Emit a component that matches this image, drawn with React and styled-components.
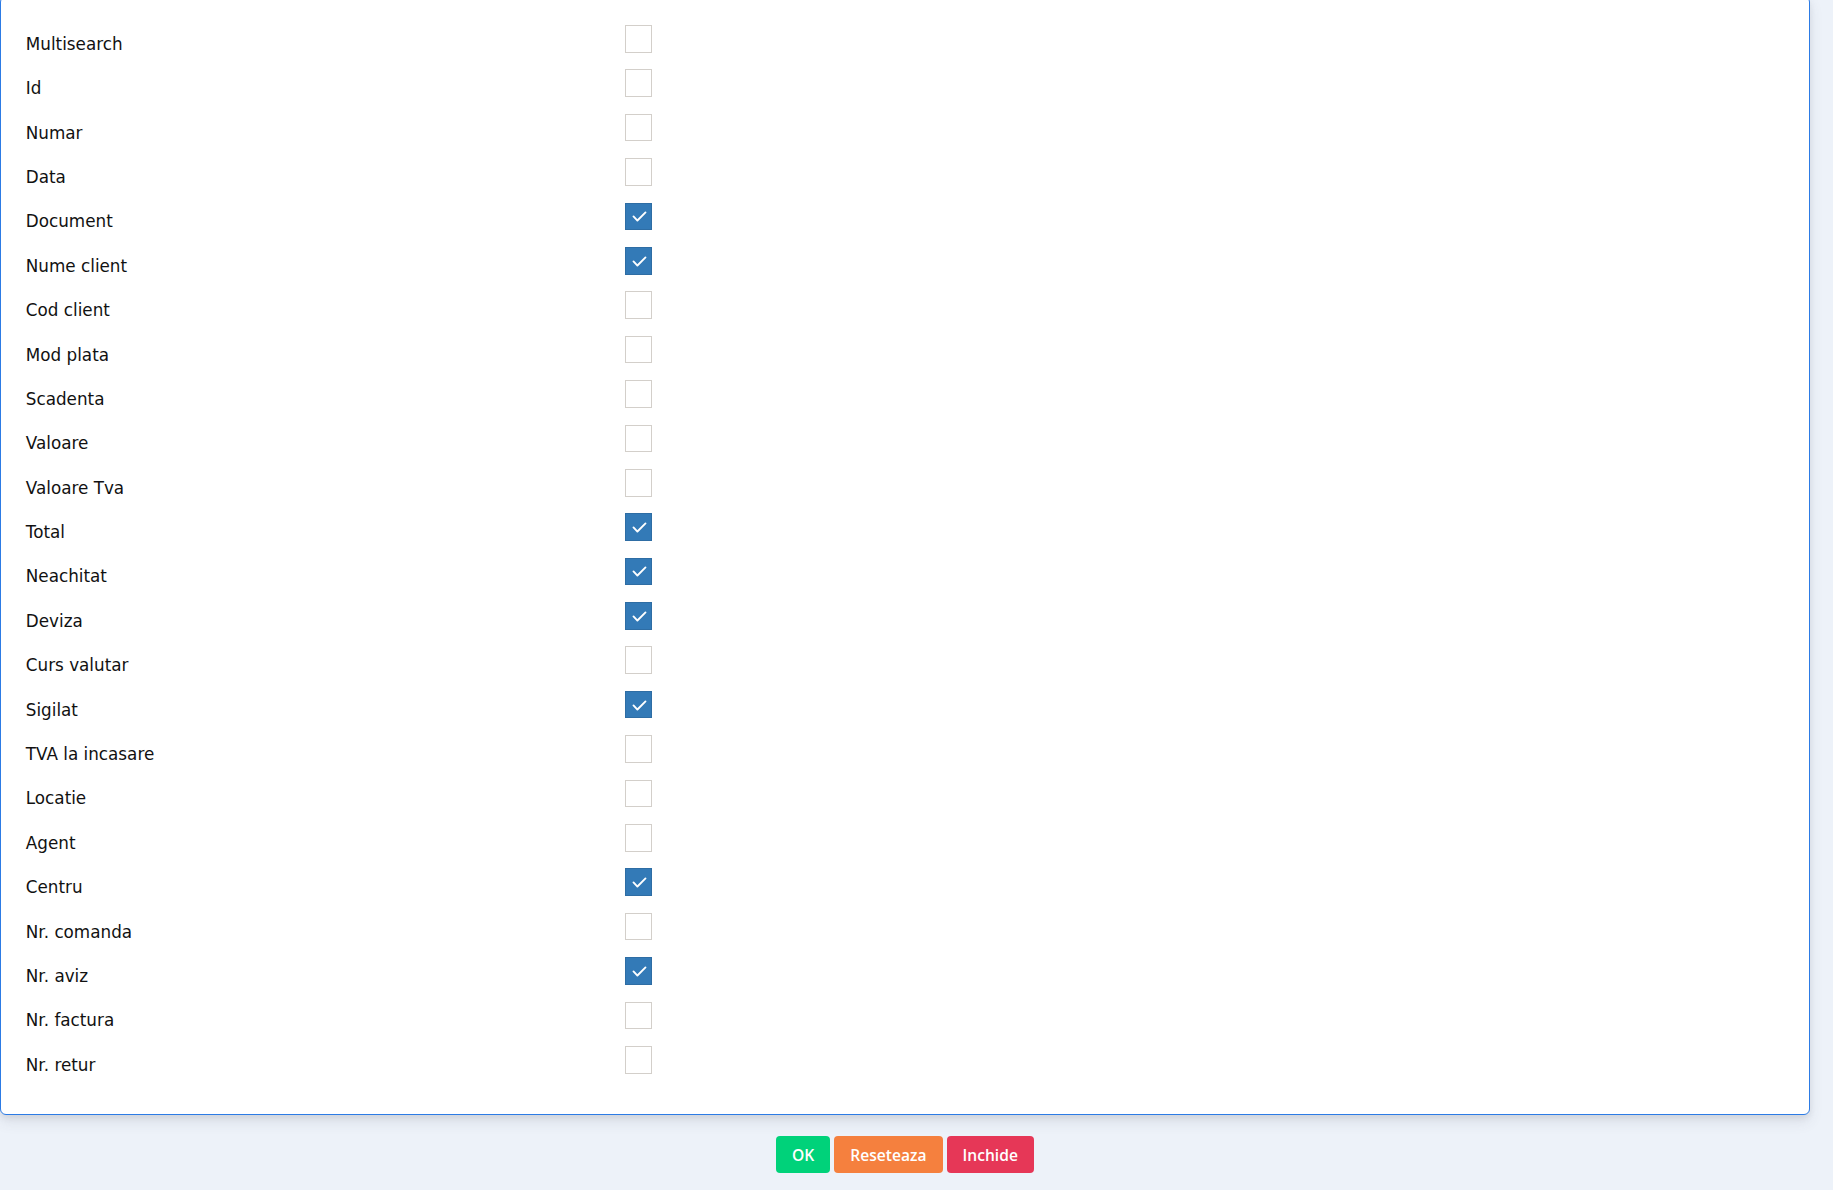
import React, { useState } from "react";
import styled, { createGlobalStyle } from "styled-components";

const GlobalStyle = createGlobalStyle`
  html, body {
    margin: 0;
    padding: 0;
    background: #edf2f9;
    overflow: hidden;
  }
  body {
    font-family: "DejaVu Sans", "Liberation Sans", sans-serif;
  }
`;

const Page = styled.div`
  width: 1810px;
  height: 1190px;
  display: flex;
  flex-direction: column;
`;

const Panel = styled.div`
  margin-top: -4px;
  background: #fff;
  border: 1.2px solid #2c7be5;
  border-radius: 6px;
  padding: 28px 0 24px 0;
  box-shadow: 0 7px 14px 0 rgba(65, 69, 88, 0.1), 0 3px 6px 0 rgba(0, 0, 0, 0.07);
`;

const Row = styled.div`
  display: flex;
  align-items: flex-start;
  height: 44.4px;
  padding-left: 24.8px;
`;

const Label = styled.label`
  width: 599px;
  padding-top: 8.8px;
  font-size: 16.8px;
  line-height: 20px;
  color: #111;
  white-space: nowrap;
`;

const Box = styled.button`
  width: 27.6px;
  height: 27.6px;
  padding: 0;
  margin: 0;
  box-sizing: border-box;
  display: flex;
  align-items: center;
  justify-content: center;
  cursor: pointer;
  border: 1.2px solid ${(p) => (p.checked ? "#2e6da4" : "#d3cfca")};
  background: ${(p) => (p.checked ? "#337ab7" : "#fff")};
  border-radius: 0;
`;

const Buttons = styled.div`
  margin-top: 21px;
  display: flex;
  justify-content: center;
  gap: 4px;
`;

const Btn = styled.button`
  height: 37px;
  padding: 0 16px;
  border: none;
  border-radius: 4px;
  background: ${(p) => p.color};
  color: #fff;
  font-family: "Open Sans", "Liberation Sans", sans-serif;
  font-weight: 600;
  font-size: 15.6px;
  cursor: pointer;
`;

const fields = [
  ["Multisearch", false],
  ["Id", false],
  ["Numar", false],
  ["Data", false],
  ["Document", true],
  ["Nume client", true],
  ["Cod client", false],
  ["Mod plata", false],
  ["Scadenta", false],
  ["Valoare", false],
  ["Valoare Tva", false],
  ["Total", true],
  ["Neachitat", true],
  ["Deviza", true],
  ["Curs valutar", false],
  ["Sigilat", true],
  ["TVA la incasare", false],
  ["Locatie", false],
  ["Agent", false],
  ["Centru", true],
  ["Nr. comanda", false],
  ["Nr. aviz", true],
  ["Nr. factura", false],
  ["Nr. retur", false],
];

const Check = () => (
  <svg width="26" height="26" viewBox="0 0 26 26" fill="none">
    <path d="M7.6 13.4 L11.6 17.6 L19.8 9.4" stroke="#fff" strokeWidth="1.9" strokeLinecap="round" strokeLinejoin="round" />
  </svg>
);

const App = () => {
  const [values, setValues] = useState(fields.map((f) => f[1]));

  const toggle = (i) => {
    const next = [...values];
    next[i] = !next[i];
    setValues(next);
  };

  return (
    <Page>
      <GlobalStyle />
      <Panel>
        {fields.map(([name], i) => (
          <Row key={name}>
            <Label>{name}</Label>
            <Box checked={values[i]} onClick={() => toggle(i)}>
              {values[i] && <Check />}
            </Box>
          </Row>
        ))}
      </Panel>
      <Buttons>
        <Btn color="#00d27a">OK</Btn>
        <Btn color="#f5803e" onClick={() => setValues(fields.map((f) => f[1]))}>Reseteaza</Btn>
        <Btn color="#e63757">Inchide</Btn>
      </Buttons>
    </Page>
  );
};

export default App;
